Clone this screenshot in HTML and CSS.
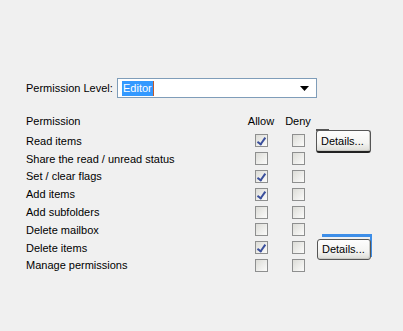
FILE: index.html
```html
<!DOCTYPE html>
<html>
<head>
<meta charset="utf-8">
<link rel="stylesheet" href="styles.css">
</head>
<body>
<div class="page">
  <div class="level-row">
    <span class="level-label">Permission Level:</span>
    <div class="select">
      <span class="sel-text">Editor</span><span class="caret"></span>
      <svg class="arrow" width="9" height="5" viewBox="0 0 9 5"><path d="M0 0H9L4.5 5Z" fill="#000"/></svg>
    </div>
  </div>
  <div class="grid">
    <div class="hdr">Permission</div><div class="hdr c">Allow</div><div class="hdr c">Deny</div><div></div>

    <div class="lbl">Read items</div><div class="c"><span class="cb on"></span></div><div class="c"><span class="cb"></span></div><div class="det"><button class="btn b1">Details...</button></div>

    <div class="lbl">Share the read / unread status</div><div class="c"><span class="cb"></span></div><div class="c"><span class="cb"></span></div><div></div>

    <div class="lbl">Set / clear flags</div><div class="c"><span class="cb on"></span></div><div class="c"><span class="cb"></span></div><div></div>

    <div class="lbl">Add items</div><div class="c"><span class="cb on"></span></div><div class="c"><span class="cb"></span></div><div></div>

    <div class="lbl">Add subfolders</div><div class="c"><span class="cb"></span></div><div class="c"><span class="cb"></span></div><div></div>

    <div class="lbl">Delete mailbox</div><div class="c"><span class="cb"></span></div><div class="c"><span class="cb"></span></div><div></div>

    <div class="lbl">Delete items</div><div class="c"><span class="cb on"></span></div><div class="c"><span class="cb"></span></div><div class="det"><span class="sel-frame"></span><button class="btn b2">Details...</button></div>

    <div class="lbl">Manage permissions</div><div class="c"><span class="cb"></span></div><div class="c"><span class="cb"></span></div><div></div>
  </div>
</div>
</body>
</html>
```

FILE: styles.css
```css
html {
  margin: 0;
  padding: 0;
  background: #f0f0f0;
}
body {
  margin: 0;
  padding: 0;
  width: 403px;
  height: 331px;
  overflow: hidden;
  font-family: Tahoma, "Liberation Sans", Arial, sans-serif;
  font-size: 11px;
  color: #000;
}
.page {
  padding: 78px 0 0 26px;
}
.level-row {
  display: flex;
  align-items: center;
  height: 20px;
}
.level-label {
  width: 91px;
}
.select {
  position: relative;
  width: 194px;
  height: 18px;
  border: 1px solid #7f9db9;
  background: #fff;
  display: flex;
  align-items: center;
  padding-left: 4px;
  box-sizing: content-box;
}
.sel-text {
  background: #3399ff;
  color: #fff;
  height: 15px;
  line-height: 15px;
  padding: 0 1px;
}
.caret {
  width: 1px;
  height: 15px;
  background: #c25a2c;
}
.arrow {
  position: absolute;
  right: 7px;
  top: 7px;
}
.grid {
  margin-top: 14px;
  display: grid;
  grid-template-columns: 216px 38px 36px auto;
  grid-template-rows: 20px repeat(8, 17.8px);
  align-items: center;
}
.hdr {
  align-self: start;
  line-height: 14px;
  padding-top: 2px;
}
.c {
  display: flex;
  justify-content: center;
}
.cb {
  position: relative;
  display: block;
  width: 13px;
  height: 13px;
  box-sizing: border-box;
  border: 1px solid #8e8f8f;
  background: linear-gradient(135deg, #dcdcd7 0%, #f2f2f0 70%, #fbfbfa 100%);
}
.cb.on::after {
  content: "";
  position: absolute;
  left: 3px;
  top: 1px;
  width: 3px;
  height: 7px;
  border-right: 2px solid #3a4f9c;
  border-bottom: 2px solid #3a4f9c;
  transform: rotate(35deg);
}
.det {
  position: relative;
  height: 17.8px;
}
.btn {
  position: absolute;
  left: 0;
  font-family: Tahoma, "Liberation Sans", Arial, sans-serif;
  font-size: 11px;
  color: #000;
  padding: 0 0 0 4px;
  text-align: left;
  border: 1px solid #555;
  border-radius: 3px;
  background: linear-gradient(#fdfdfd 0%, #f4f4f2 60%, #dcdcd7 100%);
  box-shadow: inset -1px -1px 0 #c9c9c4;
}
.b1 {
  top: -2px;
  width: 55px;
  height: 23px;
  border-bottom: 2px solid #222;
}
.b1::before {
  content: "";
  position: absolute;
  left: -1px;
  top: -2px;
  width: 13px;
  height: 2px;
  background: #555;
}
.sel-frame {
  position: absolute;
  left: 6px;
  top: -5px;
  width: 48px;
  height: 20px;
  border-top: 3px solid #3d8ee8;
  border-right: 2px solid #3d8ee8;
}
.b2 {
  top: 0;
  left: 1px;
  width: 54px;
  height: 21px;
}
```
